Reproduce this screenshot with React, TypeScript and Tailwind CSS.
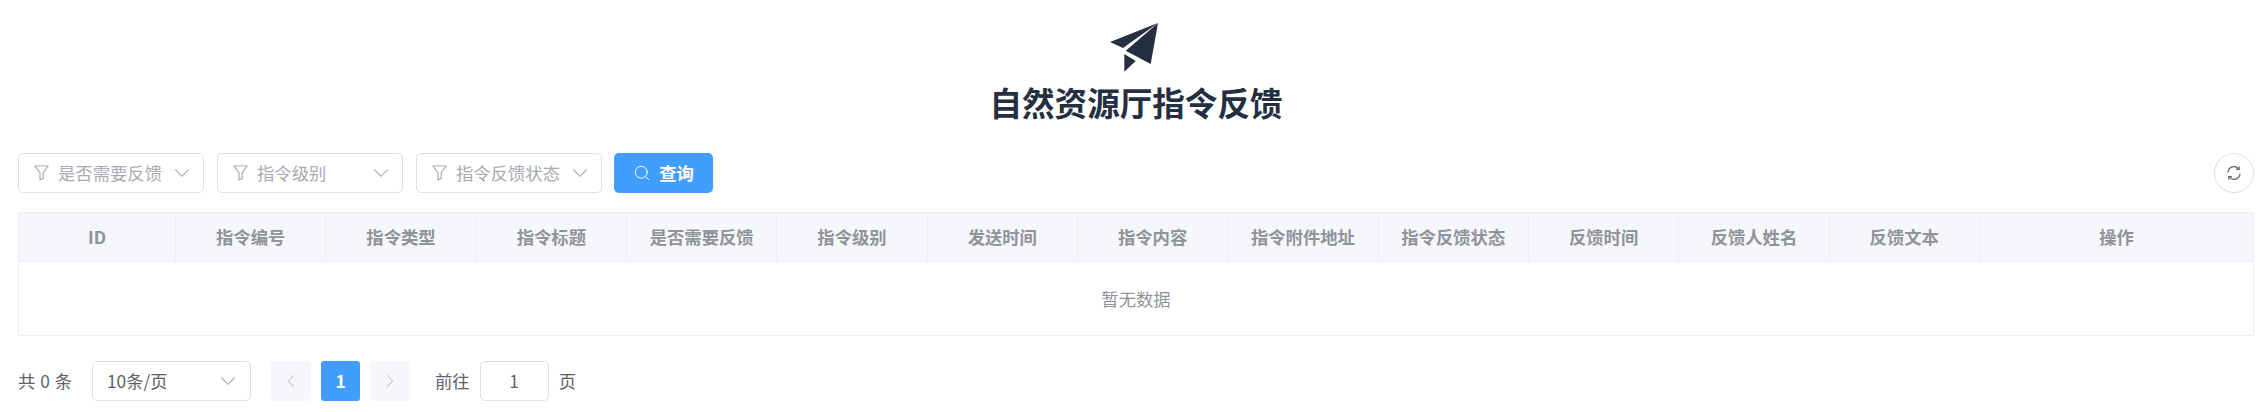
import { ChevronDown, ChevronLeft, ChevronRight, Search } from 'lucide-react'

const font = "font-['Noto_Sans_CJK_SC','Noto_Sans',sans-serif]"

const columns = [
  '指令编号',
  '指令类型',
  '指令标题',
  '是否需要反馈',
  '指令级别',
  '发送时间',
  '指令内容',
  '指令附件地址',
  '指令反馈状态',
  '反馈时间',
  '反馈人姓名',
  '反馈文本',
]

function PlaneIcon() {
  return (
    <svg width="48" height="49" viewBox="0 0 48 49" className="mr-[4px] text-[#242f42]" fill="currentColor">
      <path d="M0 19L48 0L13 25Z" />
      <path d="M48 0L40.7 41L15.7 27.7Z" />
      <path d="M14.3 31L25.7 38L14.3 48.7Z" />
    </svg>
  )
}

function FunnelIcon() {
  return (
    <svg width="15" height="16" viewBox="0 0 15 16" fill="none" stroke="#a8abb2" strokeWidth="1.2">
      <path d="M0.8 1H14.2L9.2 7.6V13.4L6 15V7.6Z" strokeLinejoin="round" />
    </svg>
  )
}

function RefreshIcon() {
  return (
    <svg width="16" height="16" viewBox="0 0 16 16" fill="none" stroke="#606266" strokeWidth="1.3">
      <path d="M2 7.2A6 6 0 0 1 12.6 3.8" />
      <path d="M14 8.8A6 6 0 0 1 3.4 12.2" />
      <path d="M13.2 1.2V4.4H10" strokeWidth="1.1" />
      <path d="M2.8 14.8V11.6H6" strokeWidth="1.1" />
    </svg>
  )
}

function FilterSelect({ label }: { label: string }) {
  return (
    <div className="flex h-10 w-[186px] items-center rounded-[5px] border border-[#dcdfe6] bg-white pl-[15px] pr-[8px]">
      <FunnelIcon />
      <span className="ml-[9px] flex-1 whitespace-nowrap text-[17.33px] leading-none text-[#a8abb2]">{label}</span>
      <ChevronDown size={26} strokeWidth={1} className="shrink-0 text-[#b4b7bd]" />
    </div>
  )
}

export default function App() {
  return (
    <div className={`${font} h-[412px] w-[2263px] overflow-hidden bg-white pl-[18px] pr-[9px] pt-[23px]`}>
      {/* Header */}
      <div className="flex flex-col items-center">
        <PlaneIcon />
        <h1 className="mt-[10px] text-[32.6px] font-bold leading-[40px] text-[#242f42]">自然资源厅指令反馈</h1>
      </div>

      {/* Filters */}
      <div className="mt-[31px] flex h-10 items-center">
        <div className="flex flex-1 items-center gap-[13px]">
          <FilterSelect label="是否需要反馈" />
          <FilterSelect label="指令级别" />
          <FilterSelect label="指令反馈状态" />
          <button className="-ml-[1px] flex h-10 w-[99px] items-center justify-center gap-[8px] rounded-[5px] bg-[#409eff] text-[17.33px] font-bold text-white">
            <Search size={18} strokeWidth={1.3} />
            查询
          </button>
        </div>
        <button className="flex h-10 w-10 items-center justify-center rounded-full border border-[#dcdfe6]">
          <RefreshIcon />
        </button>
      </div>

      {/* Table */}
      <div className="mt-[19px] border border-[#ebeef5]">
        <div className="grid h-[48px] grid-cols-[157px_repeat(12,150.33px)_1fr] bg-[#f5f7fa] text-[17.33px] font-bold text-[#909399]">
          <div className="flex items-center justify-center border-r border-[#ebeef5]">ID</div>
          {columns.map((name) => (
            <div key={name} className="flex items-center justify-center whitespace-nowrap border-r border-[#ebeef5]">
              {name}
            </div>
          ))}
          <div className="flex items-center justify-center">操作</div>
        </div>
        <div className="flex h-[74px] items-center justify-center border-t border-[#ebeef5] text-[17.33px] text-[#909399]">
          暂无数据
        </div>
      </div>

      {/* Pagination */}
      <div className="mt-[25px] flex h-10 items-center text-[17.33px] text-[#606266]">
        <span className="w-[74px] whitespace-nowrap [word-spacing:1px]">共 0 条</span>
        <div className="flex h-10 w-[159px] items-center justify-between rounded-[5px] border border-[#dcdfe6] pl-[14px] pr-[9px]">
          <span>10条/页</span>
          <ChevronDown size={26} strokeWidth={1} className="text-[#b4b7bd]" />
        </div>
        <button className="ml-[20px] flex h-10 w-10 items-center justify-center rounded-[3px] bg-[#f5f7fa] text-[#c0c4cc]">
          <ChevronLeft size={22} strokeWidth={1.1} />
        </button>
        <button className="ml-[10px] flex h-10 w-[39px] items-center justify-center rounded-[3px] bg-[#409eff] font-bold text-white">
          1
        </button>
        <button className="ml-[10px] flex h-10 w-10 items-center justify-center rounded-[3px] bg-[#f5f7fa] text-[#c0c4cc]">
          <ChevronRight size={22} strokeWidth={1.1} />
        </button>
        <span className="ml-[25px]">前往</span>
        <div className="ml-[10px] flex h-10 w-[69px] items-center justify-center rounded-[5px] border border-[#dcdfe6]">1</div>
        <span className="ml-[10px]">页</span>
      </div>
    </div>
  )
}
